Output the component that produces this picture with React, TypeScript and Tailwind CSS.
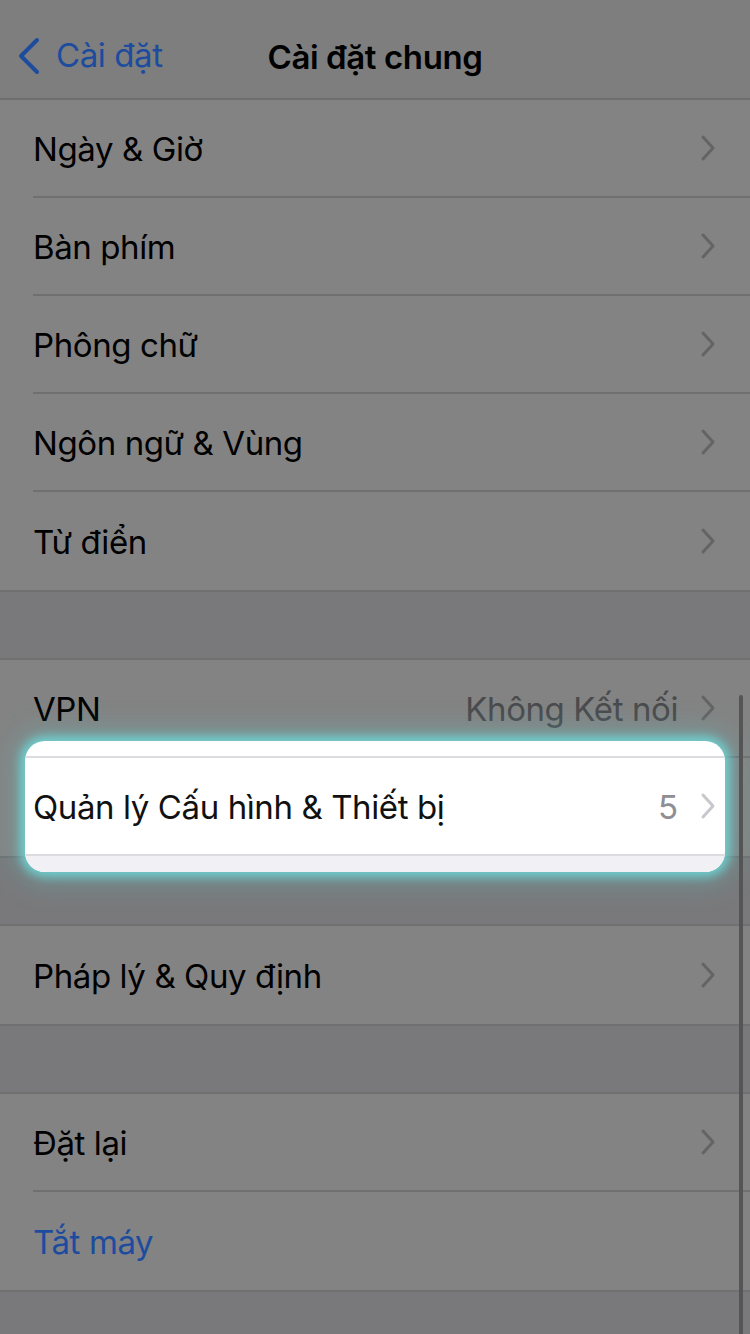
import React from "react";

const font = { fontFamily: "Inter, 'Noto Sans', 'Liberation Sans', sans-serif" };

type RowProps = {
  label: string;
  value?: string;
  blue?: boolean;
  chevron?: boolean;
  last?: boolean;
};

const Chevron = ({ color }: { color: string }) => (
  <svg width="16" height="28" viewBox="0 0 16 28" fill="none">
    <path d="M3 3 L13 14 L3 25" stroke={color} strokeWidth="3" strokeLinecap="round" strokeLinejoin="round" />
  </svg>
);

const Row = ({ label, value, blue, chevron = true, last }: RowProps) => (
  <div className="h-[98px] pl-[33px] bg-[#838383]">
    <div className={`flex h-full items-center pr-[34px] ${last ? "" : "border-b-2 border-[#707070]"}`}>
      <span className={`flex-1 pt-[4px] text-[33px] tracking-[-0.4px] ${blue ? "text-[#1d4c9f]" : "text-black"}`}>
        {label}
      </span>
      {value && <span className="mr-[22px] pt-[4px] text-[33px] tracking-[-0.4px] text-[#4a4a4c]">{value}</span>}
      {chevron && <Chevron color="#646466" />}
    </div>
  </div>
);

const Group = ({ children }: { children: React.ReactNode }) => (
  <div className="border-y-2 border-[#707070]">{children}</div>
);

export default function App() {
  return (
    <div className="relative h-[1334px] w-[750px] overflow-hidden bg-[#79797b]" style={font}>
      {/* nav bar */}
      <div className="relative flex h-[100px] items-center border-b-2 border-[#6e6e6e] bg-[#7e7e7e]">
        <div className="flex items-center pl-[16px] pt-[14px]">
          <svg width="26" height="40" viewBox="0 0 26 40" fill="none">
            <path d="M21 4 L5 20 L21 36" stroke="#1d4c9f" strokeWidth="4" strokeLinecap="round" strokeLinejoin="round" />
          </svg>
          <span className="ml-[14px] text-[33px] tracking-[-0.4px] text-[#1d4c9f]">Cài đặt</span>
        </div>
        <div className="absolute left-0 right-0 top-[33px] text-center text-[33px] font-semibold tracking-[-0.4px] text-black">
          Cài đặt chung
        </div>
      </div>

      <div className="border-b-2 border-[#707070]">
        <Row label="Ngày & Giờ" />
        <Row label="Bàn phím" />
        <Row label="Phông chữ" />
        <Row label="Ngôn ngữ & Vùng" />
        <Row label="Từ điển" last />
      </div>

      <div className="h-[66px]" />
      <Group>
        <Row label="VPN" value="Không Kết nối" />
        <Row label="Quản lý Cấu hình & Thiết bị" value="5" last />
      </Group>

      <div className="h-[66px]" />
      <Group>
        <Row label="Pháp lý & Quy định" last />
      </Group>

      <div className="h-[66px]" />
      <Group>
        <Row label="Đặt lại" />
        <Row label="Tắt máy" blue chevron={false} last />
      </Group>

      {/* highlighted item */}
      <div className="absolute left-[25px] top-[741px] h-[131px] w-[700px] overflow-hidden rounded-[20px] bg-white shadow-[0_0_10px_5px_rgba(110,215,215,0.85),0_0_28px_10px_rgba(100,200,200,0.35)]">
        <div className="h-[17px] border-b-2 border-[#dcdce0] ml-[-3px]" />
        <div className="ml-[-25px] w-[750px]">
          <div className="h-[96px] pl-[33px] flex items-center pr-[34px]">
            <span className="flex-1 pt-[4px] text-[33px] tracking-[-0.4px] text-[#111]">Quản lý Cấu hình & Thiết bị</span>
            <span className="mr-[22px] pt-[4px] text-[33px] text-[#8e8e93]">5</span>
            <Chevron color="#c7c7cc" />
          </div>
        </div>
        <div className="h-[18px] border-t-2 border-[#dcdce0] bg-[#f1f1f5]" />
      </div>

      {/* scroll indicator */}
      <div className="absolute right-[7px] top-[695px] h-[700px] w-[4px] rounded-full bg-[#555]" />
    </div>
  );
}
